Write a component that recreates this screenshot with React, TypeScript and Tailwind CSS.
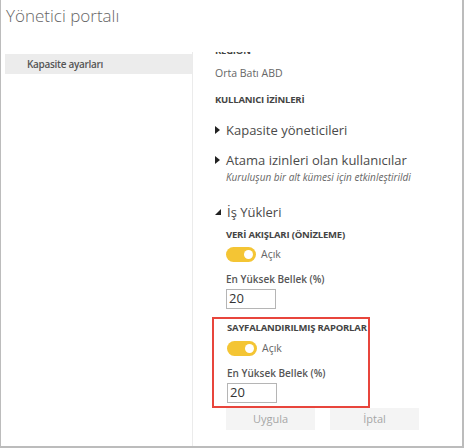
import React from "react";

const sans = { fontFamily: '"Open Sans", "Noto Sans", sans-serif' };

function Caret({ open }: { open?: boolean }) {
  if (open) {
    return (
      <svg width="6" height="6" viewBox="0 0 6 6" className="shrink-0">
        <polygon points="6,0 6,6 0,6" fill="#222" />
      </svg>
    );
  }
  return (
    <svg width="5" height="8" viewBox="0 0 5 8" className="shrink-0">
      <polygon points="0,0 5,4 0,8" fill="#222" />
    </svg>
  );
}

function Toggle() {
  return (
    <div className="flex items-center gap-[5px] h-[15px]">
      <div className="w-[30px] h-[15px] rounded-full bg-[#f4c534] flex items-center justify-end pr-[3px]">
        <div className="w-[9px] h-[9px] rounded-full bg-white" />
      </div>
      <span className="text-[10.5px] text-[#666]">Açık</span>
    </div>
  );
}

function Workload({ title, first }: { title: string; first?: boolean }) {
  return (
    <div className="flex flex-col">
      <div className="text-[9.5px] font-bold text-[#444] leading-[14px] tracking-[-0.2px] whitespace-nowrap">
        {title}
      </div>
      <div className={first ? "mt-[5px]" : "mt-[6px]"}>
        <Toggle />
      </div>
      <div className="mt-[10px] text-[10px] font-semibold text-[#555] leading-[14px] whitespace-nowrap">
        En Yüksek Bellek (%)
      </div>
      <div className="mt-[3px] w-[50px] h-[20px] border border-[#b5b5b5] flex items-center px-[2px] text-[13px] text-[#333]">
        20
      </div>
    </div>
  );
}

export default function App() {
  return (
    <div
      className="w-[464px] h-[448px] bg-white border-l border-r-2 border-b-2 border-[#bcbcbc] flex flex-col overflow-hidden"
      style={sans}
    >
      <div className="h-[52px] pl-[5px] pt-[4px] text-[17px] font-light text-[#666] leading-[24px]">
        Yönetici portalı
      </div>
      <div className="flex flex-1 min-h-0">
        <div className="w-[191px] pl-[4px] pt-[2px]">
          <div className="h-[20px] bg-[#ececec] flex items-center pl-[22px] text-[10px] font-semibold text-[#555] tracking-[-0.3px]">
            Kapasite ayarları
          </div>
        </div>
        <div className="flex-1 border-l border-[#ebebeb] overflow-hidden pl-[22px]">
          <div className="-mt-[8px] flex flex-col">
            <div className="text-[9.5px] font-bold text-[#444] leading-[14px] tracking-[-0.2px]">REGION</div>
            <div className="mt-[8px] text-[10.5px] text-[#666] leading-[14px]">Orta Batı ABD</div>
            <div className="mt-[13px] text-[9.5px] font-bold text-[#444] leading-[14px] tracking-[-0.2px]">
              KULLANICI İZİNLERİ
            </div>
            <div className="mt-[14px] flex items-center gap-[6px] text-[13px] text-[#4a4a4a] leading-[18px]">
              <Caret />
              <span>Kapasite yöneticileri</span>
            </div>
            <div className="mt-[12px] flex items-center gap-[6px] text-[13px] text-[#4a4a4a] leading-[18px]">
              <Caret />
              <span>Atama izinleri olan kullanıcılar</span>
            </div>
            <div className="mt-[1px] pl-[11px] text-[10px] italic text-[#666] leading-[14px]">
              Kuruluşun bir alt kümesi için etkinleştirildi
            </div>
            <div className="mt-[19px] flex items-center gap-[6px] text-[13px] text-[#4a4a4a] leading-[18px]">
              <Caret open />
              <span>İş Yükleri</span>
            </div>
            <div className="pl-[11px] mt-[7px] flex flex-col">
              <Workload title="VERİ AKIŞLARI (ÖNİZLEME)" first />
            </div>
            <div className="-ml-[3px] mt-[8px] w-[158px] border-2 border-[#e8453c] pl-[13px] pt-[2px] pb-[3px]">
              <Workload title="SAYFALANDIRILMIŞ RAPORLAR" />
            </div>
            <div className="pl-[11px] flex gap-[15px]">
              <div className="w-[89px] h-[22px] bg-[#f4f4f4] flex items-center justify-center text-[11px] text-[#a6a6a6]">
                Uygula
              </div>
              <div className="w-[89px] h-[22px] bg-[#f4f4f4] flex items-center justify-center text-[11px] text-[#a6a6a6]">
                İptal
              </div>
            </div>
          </div>
        </div>
      </div>
    </div>
  );
}
